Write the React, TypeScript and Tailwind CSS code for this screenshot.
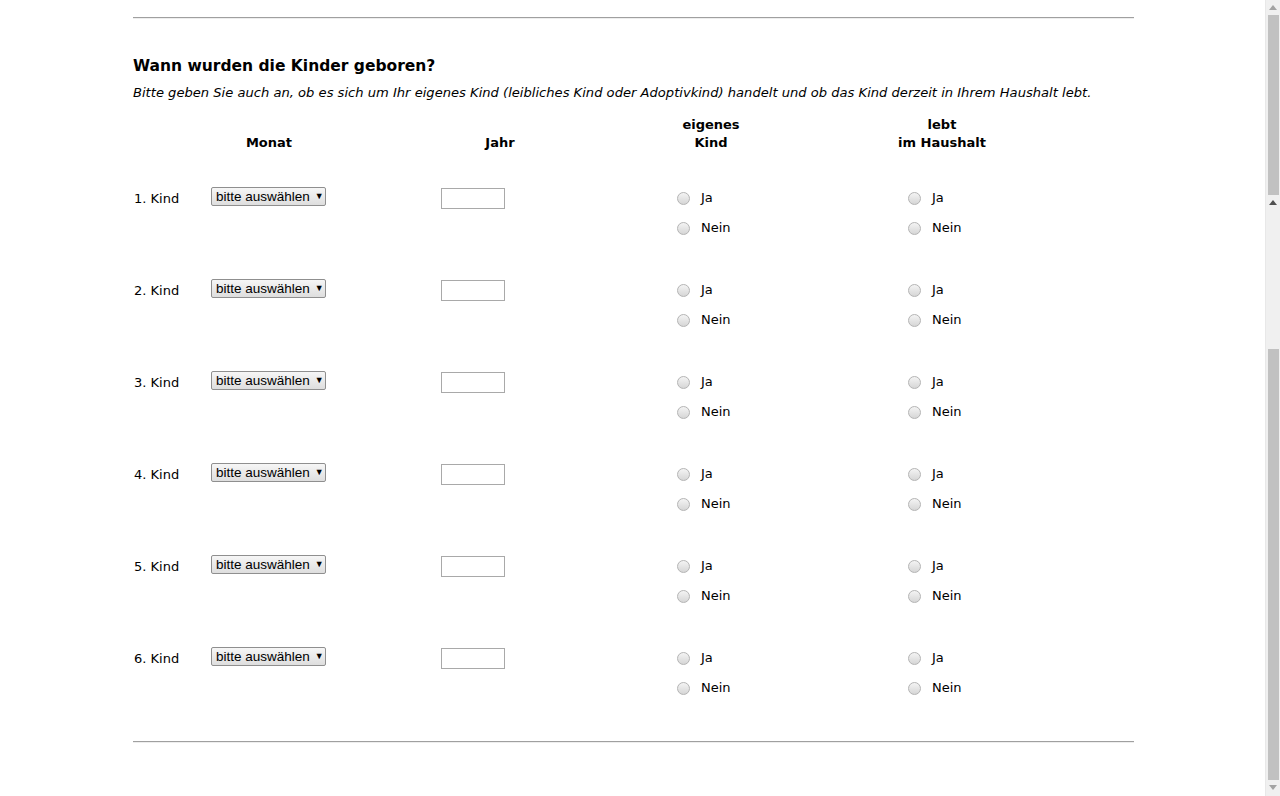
import React from "react";

const KINDER = [1, 2, 3, 4, 5, 6];

function Radio({ label }: { label: string }) {
  return (
    <label className="flex h-[30px] items-center">
      <span className="h-[13px] w-[13px] rounded-full border border-[#b4b4b4] bg-gradient-to-b from-[#f4f4f4] to-[#d6d6d6]" />
      <span className="ml-[11px]">{label}</span>
    </label>
  );
}

function Auswahl() {
  return (
    <div className="flex h-[19px] w-[115px] items-center rounded-[2px] border border-[#8f8f8f] bg-gradient-to-b from-[#f6f6f6] to-[#dedede] pl-[4px] font-['Liberation_Sans',Arial,sans-serif] text-[13.5px] leading-none text-black">
      <span>bitte auswählen</span>
      <span className="ml-[5px] text-[9px]">▼</span>
    </div>
  );
}

function HeaderCell({ width, lines }: { width: string; lines: string[] }) {
  return (
    <div className={`flex flex-col items-center ${width}`}>
      {lines.map((l) => (
        <span key={l} className="whitespace-nowrap">
          {l}
        </span>
      ))}
    </div>
  );
}

function Scrollbar() {
  return (
    <div className="flex h-[796px] w-[15px] flex-col items-center border-l border-[#e8e8e8] bg-[#f0f0f0]">
      <div className="mt-[5px] h-0 w-0 border-x-[4px] border-b-[5px] border-x-transparent border-b-[#a3a3a3]" />
      <div className="mt-[5px] h-[180px] w-[11px] bg-[#c1c1c1]" />
      <div className="mt-[5px] h-0 w-0 border-x-[4px] border-b-[5px] border-x-transparent border-b-[#505050]" />
      <div className="mt-[144px] h-[431px] w-[11px] bg-[#c1c1c1]" />
      <div className="mt-[5px] h-0 w-0 border-x-[4px] border-t-[5px] border-x-transparent border-t-[#a3a3a3]" />
    </div>
  );
}

export default function App() {
  return (
    <div className="flex h-[796px] w-[1280px] overflow-hidden bg-white font-['DejaVu_Sans',Verdana,sans-serif] text-[13px] leading-[18px] text-black">
      <main className="flex-1 pl-[133px]">
        <div className="w-[1001px]">
          <hr className="mt-[17px] border-t border-b border-t-[#a0a0a0] border-b-[#eeeeee]" />

          <h2 className="mt-[37px] text-[15.5px] font-bold leading-[20px]">
            Wann wurden die Kinder geboren?
          </h2>
          <p className="mt-[8px] text-[13.1px] italic">
            Bitte geben Sie auch an, ob es sich um Ihr eigenes Kind (leibliches
            Kind oder Adoptivkind) handelt und ob das Kind derzeit in Ihrem
            Haushalt lebt.
          </p>

          <div className="mt-[14px] grid grid-cols-[78px_230px_236px_231px_1fr] items-end font-bold">
            <div />
            <HeaderCell width="w-[116px]" lines={["Monat"]} />
            <HeaderCell width="w-[118px]" lines={["Jahr"]} />
            <HeaderCell width="w-[68px]" lines={["eigenes", "Kind"]} />
            <HeaderCell width="w-[68px]" lines={["lebt", "im Haushalt"]} />
          </div>

          <div className="mt-[31px] flex flex-col gap-[32px]">
            {KINDER.map((n) => (
              <div
                key={n}
                className="grid grid-cols-[78px_230px_236px_231px_1fr] items-start"
              >
                <div className="flex h-[30px] items-center pl-[1px] pt-[1px]">{n}. Kind</div>
                <div className="flex h-[30px] items-start pt-[4px]">
                  <Auswahl />
                </div>
                <div className="flex h-[30px] items-center">
                  <input
                    type="text"
                    className="h-[21px] w-[64px] border border-[#a9a9a9] bg-white"
                  />
                </div>
                <div className="flex flex-col">
                  <Radio label="Ja" />
                  <Radio label="Nein" />
                </div>
                <div className="flex flex-col">
                  <Radio label="Ja" />
                  <Radio label="Nein" />
                </div>
              </div>
            ))}
          </div>

          <hr className="mt-[38px] border-t border-b border-t-[#a0a0a0] border-b-[#eeeeee]" />
        </div>
      </main>
      <Scrollbar />
    </div>
  );
}
